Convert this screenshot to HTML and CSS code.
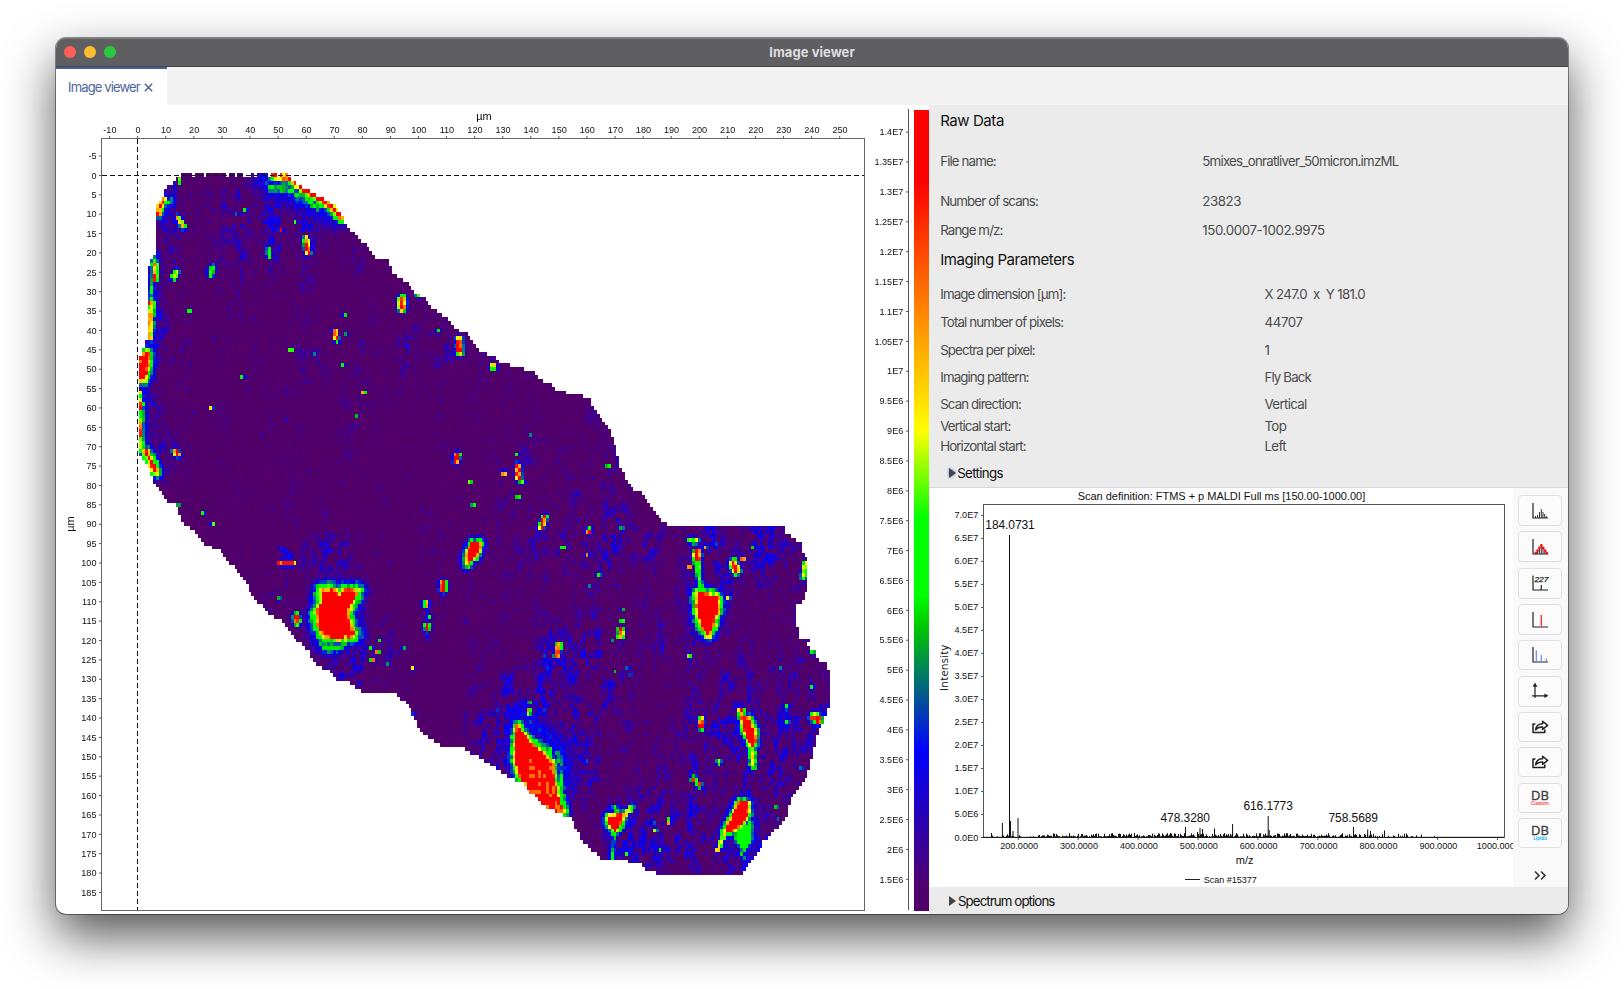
FILE: index.html
```html
<!DOCTYPE html>
<html lang="en">
<head>
<meta charset="utf-8">
<title>Image viewer</title>
<link rel="stylesheet" href="styles.css">
</head>
<body>
<div class="window">
  <header class="titlebar">
    <div class="lights"><i class="light red"></i><i class="light amber"></i><i class="light green"></i></div>
    <span class="title">Image viewer</span>
  </header>
  <nav class="tabs">
    <div class="tab"><span class="tab-label">Image viewer</span>
      <svg class="close" viewBox="0 0 9 9"><path d="M.8.8l7.4 7.4M8.2.8L.8 8.2"/></svg>
    </div>
  </nav>
  <main class="content">
    <section class="image-plot">
      <canvas id="heat" class="heat" width="873" height="809"></canvas>
      <svg id="axes" class="axes" viewBox="56 105 873 809">
        <defs>
          <linearGradient id="scale" gradientUnits="userSpaceOnUse" x1="0" y1="911" x2="0" y2="110">
            <stop offset="0" stop-color="#500064"/><stop offset=".035" stop-color="#500070"/>
            <stop offset=".2" stop-color="#0000ff"/><stop offset=".355" stop-color="#00c800"/>
            <stop offset=".395" stop-color="#00ff00"/><stop offset=".49" stop-color="#00ff00"/>
            <stop offset=".6" stop-color="#ffff00"/><stop offset=".91" stop-color="#ff0000"/>
            <stop offset="1" stop-color="#ff0000"/>
          </linearGradient>
        </defs>
        <rect x="914" y="110" width="15" height="801" fill="url(#scale)"/>
      </svg>
    </section>
    <aside class="side">
      <div class="info">
        <div class="row h33 heading"><span>Raw Data</span></div>
        <div class="row h47"><span>File name:</span><span class="file">5mixes_onratliver_50micron.imzML</span></div>
        <div class="row h33"><span>Number of scans:</span><span class="num">23823</span></div>
        <div class="row h25"><span>Range m/z:</span><span class="num">150.0007-1002.9975</span></div>
        <div class="row h34 heading"><span>Imaging Parameters</span></div>
        <div class="row wide h34"><span>Image dimension [µm]:</span><span class="dims">X 247.0&nbsp; x&nbsp; Y 181.0</span></div>
        <div class="row wide h22"><span>Total number of pixels:</span><span class="num">44707</span></div>
        <div class="row wide h34"><span>Spectra per pixel:</span><span>1</span></div>
        <div class="row wide h20"><span>Imaging pattern:</span><span>Fly Back</span></div>
        <div class="row wide h34"><span>Scan direction:</span><span class="dims">Vertical</span></div>
        <div class="row wide h11"><span>Vertical start:</span><span class="dims">Top</span></div>
        <div class="row wide h28"><span>Horizontal start:</span><span class="dims">Left</span></div>
        <div class="fold settings"><svg class="arrow glow" viewBox="0 0 7 10"><path d="M0 0l7 5-7 5z"/></svg><span>Settings</span></div>
      </div>
      <div class="spectrum">
        <svg id="spec" class="spec" viewBox="929 488 584 399"></svg>
        <div class="tools">
          <button class="tool"><svg viewBox="0 0 16 16"><path d="M1 0v15h15" class="k"/><path class="t" d="M3.5 15v-2M5.5 15v-3M7.5 15V9M9.3 15V6M11 15V9M12.7 15v-4M14.3 15v-2"/></svg></button>
          <button class="tool"><svg viewBox="0 0 16 16"><path d="M1 0v15h15" class="k"/><path class="t" d="M5.5 15v-3M7.5 15V9M9.3 15V6M11 15V9M12.7 15v-4"/><g fill="#f00d1c"><circle cx="9.3" cy="6.5" r="1.4"/><circle cx="7.4" cy="9" r="1.4"/><circle cx="11.2" cy="9" r="1.4"/><circle cx="5.6" cy="11.6" r="1.4"/><circle cx="13" cy="11.6" r="1.4"/><circle cx="3.8" cy="14" r="1.4"/><circle cx="14.8" cy="14" r="1.4"/></g></svg></button>
          <button class="tool"><svg viewBox="0 0 16 16"><path d="M1 .5V15h15M9.3 15v-5" class="k"/><text x="2.4" y="6.8" font-size="8" font-style="italic" textLength="14" lengthAdjust="spacingAndGlyphs" stroke="#222" stroke-width=".25">227</text></svg></button>
          <button class="tool"><svg viewBox="0 0 16 16"><path d="M1 0v15h15" class="k"/><path d="M9.3 14.5V3" stroke="#f22" stroke-width="1.3"/></svg></button>
          <button class="tool h30"><svg viewBox="0 0 16 16"><path d="M1 0v15h15" class="k"/><path d="M4.3 14.5V3.5M9.3 14.5V8M14.3 14.5v-3" stroke="#6b82ee" stroke-width="1.2"/></svg></button>
          <button class="tool"><svg viewBox="0 0 16 16"><path d="M3 15V2M0 12.8h14" class="k"/><path d="M3-.4l2.4 4.2H.6zM16.5 12.8l-4.1-2.3v4.6z"/></svg></button>
          <button class="tool h30"><svg viewBox="0 0 16 16"><path d="M3.4 5H1v8.6h11.8v-3M3.6 10.8C4.3 6.7 7 4.8 10.6 4.8V2.2l5 4.2-5 4V8C7.6 7.8 5.5 8.3 3.6 10.8z" class="share"/></svg></button>
          <button class="tool h30"><svg viewBox="0 0 16 16"><path d="M3.4 5H1v8.6h11.8v-3M3.6 10.8C4.3 6.7 7 4.8 10.6 4.8V2.2l5 4.2-5 4V8C7.6 7.8 5.5 8.3 3.6 10.8z" class="share"/></svg></button>
          <button class="tool h30 db"><b>DB</b><small class="custom">Custom</small></button>
          <button class="tool h30 db"><b>DB</b><small class="lipids">Lipids</small></button>
          <svg class="more" viewBox="0 0 12 9"><path d="M1 .5l4 4-4 4M7 .5l4 4-4 4"/></svg>
        </div>
      </div>
      <div class="fold options"><svg class="arrow" viewBox="0 0 7 10"><path d="M0 0l7 5-7 5z"/></svg><span>Spectrum options</span></div>
    </aside>
  </main>
</div>
<script src="plots.js"></script>
</body>
</html>
```
FILE: styles.css
```css
* { box-sizing: border-box; }
body { margin: 0; width: 1624px; height: 989px; padding: 38px 56px 0; background: #fff; overflow: hidden; font-family: Inter, "Liberation Sans", sans-serif; }
.window { width: 1512px; height: 876px; border-radius: 10px; overflow: hidden; background: #fff; display: flex; flex-direction: column; box-shadow: 0 0 0 1px rgba(0,0,0,.42), 0 22px 50px rgba(0,0,0,.67); }
.titlebar { height: 29px; background: #5f5f61; border-bottom: 1px solid #444; box-shadow: inset 0 1px #7b7b7c; display: grid; grid-template-columns: 100px 1fr 100px; align-items: center; }
.lights { display: flex; gap: 8px; padding-left: 8px; }
.light { width: 12px; height: 12px; border-radius: 50%; }
.red { background: #ff5f57; }
.amber { background: #febc2e; }
.green { background: #28c840; }
.title { text-align: center; font-size: 13px; font-weight: 700; color: #dededf; letter-spacing: .05px; padding-bottom: 1px; }
.tabs { height: 38px; background: #f3f3f3; display: flex; }
.tab { width: 111px; background: #fff; border-top: 2px solid #4b5f99; display: flex; align-items: center; gap: 4.5px; padding: 0 0 0 12px; color: #4f649c; font-size: 13px; }
.tab-label { width: 71px; letter-spacing: -.85px; white-space: nowrap; }
.close { width: 9px; height: 9px; stroke: #4a5f97; stroke-width: 1.4; fill: none; }
.content { flex: 1; display: flex; }
.image-plot { width: 873px; height: 809px; position: relative; }
.heat, .axes { position: absolute; left: 0; top: 0; width: 873px; height: 809px; }
svg text { font-family: "Liberation Sans", Arial, sans-serif; fill: #111; }
.tick { font-size: 9.1px; }
.axis-name { font-size: 11px; }
.side { width: 639px; display: flex; flex-direction: column; background: #ebebeb; }
.info { height: 382px; padding-left: 11.2px; font-size: 13.3px; letter-spacing: -.88px; color: #4c4c4c; }
.row { display: grid; grid-template-columns: 262px 1fr; align-items: center; white-space: nowrap; line-height: 11px; }
.wide { grid-template-columns: 324.3px 1fr; }
.num { letter-spacing: -.38px; }
.file { letter-spacing: -.75px; }
.dims { letter-spacing: -.66px; }
.h33 { height: 33px; } .h47 { height: 47px; } .h25 { height: 25px; } .h34 { height: 34px; }
.h22 { height: 22px; } .h20 { height: 20px; } .h11 { height: 11px; } .h28 { height: 28px; }
.heading { font-size: 15px; letter-spacing: -.43px; color: #111; padding-bottom: 2px; }
.fold { display: flex; align-items: center; gap: 1px; height: 26px; color: #111; font-size: 13.3px; letter-spacing: -.65px; }
.settings { padding-left: 9px; }
.options { padding-left: 20px; height: 27px; letter-spacing: -.92px; }
.options span { padding-left: 1px; }
.arrow { width: 7px; height: 10px; fill: #444; overflow: visible; }
.glow { filter: drop-shadow(0 0 1.5px #4a86d8); }
.spectrum { height: 400px; border-top: 1px solid #d8d8d8; display: flex; background: #fff; }
.spec { width: 584px; height: 399px; }
.tools { width: 55px; background: #f9f9f9; padding: 7px 6px 0 5px; display: flex; flex-direction: column; gap: 5.35px; align-items: stretch; }
.tool { height: 31px; border: 1px solid #e0e0e0; border-radius: 4px; background: #fbfbfb; padding: 0; display: flex; align-items: center; justify-content: center; }
.tool.h30 { height: 30px; }
.tool svg { width: 16px; height: 16px; overflow: visible; fill: #222; }
.k { fill: none; stroke: #222; stroke-width: 1.2; }
.t { fill: none; stroke: #333; stroke-width: 1; }
.share { fill: none; stroke: #222; stroke-width: 1.5; stroke-linejoin: round; }
.db { flex-direction: column; font-family: "Open Sans", Inter, sans-serif; color: #3c3c3c; }
.db b { font-weight: 400; font-size: 13px; line-height: 11.5px; -webkit-text-stroke: .35px #3c3c3c; }
.db small { font-size: 5px; line-height: 5px; -webkit-text-stroke: .2px currentColor; }
.custom { color: #ff4b4b; }
.lipids { color: #18b8f0; }
.more { width: 12px; height: 9px; margin: 17.5px auto 0; fill: none; stroke: #333; stroke-width: 1.6; overflow: visible; }
```
FILE: plots.js
```js
const NS = 'http://www.w3.org/2000/svg';
function el(parent, tag, attrs, text) {
  const n = document.createElementNS(NS, tag);
  for (const k in attrs) n.setAttribute(k, attrs[k]);
  if (text !== undefined) n.textContent = text;
  parent.appendChild(n);
  return n;
}
function line(p, x1, y1, x2, y2, extra) {
  el(p, 'line', Object.assign({ x1, y1, x2, y2, stroke: '#555', 'stroke-width': 1 }, extra));
}
const X0 = 137.7, SX = 2.808, Y0 = 175.4, SY = 3.876;

// Axes of the ion image
const ax = document.getElementById('axes');
el(ax, 'rect', { x: 101.5, y: 138.5, width: 763, height: 772, fill: 'none', stroke: '#666' });
for (let v = -10; v <= 250; v += 10) {
  const x = X0 + v * SX;
  line(ax, x, 136, x, 138);
  el(ax, 'text', { x: x + .3, y: 133, 'text-anchor': 'middle', class: 'tick' }, v);
}
for (let v = -5; v <= 185; v += 5) {
  const y = Y0 + v * SY;
  line(ax, 99, y, 101, y);
  el(ax, 'text', { x: 96.5, y: y + 3.2, 'text-anchor': 'end', class: 'tick' }, v);
}
el(ax, 'text', { x: 484, y: 120, 'text-anchor': 'middle', class: 'axis-name' }, 'µm');
el(ax, 'text', { x: 0, y: 0, 'text-anchor': 'middle', class: 'axis-name', transform: 'translate(74 524) rotate(-90)' }, 'µm');
line(ax, 908.5, 109, 908.5, 910);
line(ax, 137.5, 139, 137.5, 910, { stroke: '#111', 'stroke-dasharray': '5 3' });
line(ax, 102, 175.5, 864, 175.5, { stroke: '#111', 'stroke-dasharray': '5 3' });
for (let i = 0; i <= 25; i++) {
  const v = 15 + i * 5, y = 879.3 - i * 29.885;
  line(ax, 906, y, 908, y);
  el(ax, 'text', { x: 903.3, y: y + 3.2, 'text-anchor': 'end', class: 'tick' }, v >= 100 ? v / 100 + 'E7' : v / 10 + 'E6');
}

// Ion image
const outline = [[185,174],[285,174],[303,188],[322,197],[330,202],[342,213],[345,225],[355,233],[365,245],[377,258],[388,260],[393,273],[408,283],[415,292],[427,300],[433,308],[445,317],[455,327],[466,334],[473,342],[482,352],[496,356],[500,363],[505,364],[519,368],[536,372],[537,379],[550,383],[556,390],[578,395],[589,399],[595,408],[606,423],[612,437],[617,450],[620,467],[626,477],[630,487],[640,492],[648,502],[658,517],[668,526],[783,526],[788,535],[800,542],[803,553],[808,563],[808,578],[805,597],[797,606],[797,625],[800,638],[811,639],[808,645],[816,653],[819,662],[825,662],[830,675],[831,700],[827,713],[824,721],[819,730],[816,740],[813,755],[808,772],[802,785],[790,802],[785,820],[775,830],[763,843],[752,862],[740,876],[665,876],[648,871],[637,862],[603,860],[588,847],[580,837],[572,818],[558,813],[543,805],[535,797],[523,783],[510,778],[493,767],[480,758],[465,749],[443,748],[420,732],[412,712],[398,694],[367,694],[350,683],[337,682],[330,672],[317,665],[308,650],[295,638],[280,620],[272,616],[258,602],[249,589],[243,577],[230,563],[218,548],[207,547],[193,530],[182,523],[178,507],[165,499],[156,487],[147,465],[139,453],[140,395],[138,373],[140,357],[148,337],[148,268],[155,253],[155,210],[160,200],[168,187],[178,178]];
// peak, falloff, points
const spots = [
  [14,8,[323,592],[330,591],[340,597],[346,592],[355,592],[352,598],[347,609],[345,617],[350,628],[353,634],[337,637],[324,633],[319,623],[318,613],[323,603]],
  [6,7,[320,645],[345,645],[338,650],[324,651]],[6.2,5,[325,585],[331,584]],[4,22,[325,605],[350,605],[345,640],[325,640]],
  [14,6,[518,727],[523,736],[533,747],[546,756],[551,763],[553,780],[557,797],[562,812],[558,812],[543,805],[535,795],[523,780],[517,767],[516,753],[517,737]],
  [6.5,5,[527,735],[560,755],[561,778],[564,800]],
  [3.9,19,[522,715],[560,745],[568,780]],
  [14,6,[698,594],[717,597],[717,610],[711,628],[708,634],[702,625],[698,612]],[3.4,22,[697,595],[720,597],[708,630]],
  [14,4,[743,719],[749,719],[754,730],[755,743],[752,747],[745,733]],[3.6,10,[744,719],[754,745]],
  [12,2,[741,711],[742,717]],[9,3,[752,748],[753,766]],
  [14,5,[740,803],[747,804],[747,815],[737,827],[726,832],[731,820]],[3.6,14,[740,803],[750,850],[728,832]],
  [7.2,4.5,[735,836],[750,822],[752,840],[744,850]],[5.5,4,[740,852],[745,859]],[9,2,[725,833],[718,850]],
  [14,4.5,[608,818],[622,815],[621,822],[615,831],[610,825]],[8.5,2.5,[625,814],[632,807]],[7,4,[615,832],[612,857]],[5.5,3,[612,808],[622,811]],
  [14,4.5,[472,544],[480,543],[477,553],[467,564],[467,557]],
  [14.5,6,[141,357],[147,353],[147,363],[144,378],[139,378]],[3.8,12,[150,337],[148,360],[143,395],[143,450]],
  [6.5,6,[155,255],[152,285],[152,340]],[13,2,[149,303],[153,305]],[10,3,[151,310],[150,337]],[12,2,[155,263],[155,279]],
  [7.5,3,[140,393],[141,448]],[12,1.5,[141,404],[140,408]],[12,1.5,[140,422],[140,436]],
  [16.5,5,[146,452],[151,462],[156,472]],
  [17,4,[158,213],[160,206],[163,200]],[6.5,6,[165,205],[171,200]],[3.5,14,[165,195],[165,215]],
  [17.5,4.5,[274,175],[290,179],[304,189],[321,199],[334,210],[341,218]],[7,8.5,[272,188],[290,190],[305,198],[318,207]],
  [6,4,[267,184],[272,190]],
  [4,20,[262,180],[300,202],[335,218]],
  [13,2,[306,240],[308,252]],[6,1.5,[269,249],[269,257]],[7,3,[211,274],[213,267]],[11,2,[174,277],[177,272]],
  [10,1.5,[178,217],[184,227]],[9,1,[180,181]],[12,1,[281,230]],[6.5,1,[245,211]],[5,1,[236,214]],[7,1,[295,222]],[7,1,[190,311]],
  [12,1.5,[335,331],[337,340]],[15,2.5,[402,299],[402,308]],[8,1.5,[418,296]],[7,1.5,[438,331]],[5.5,1,[345,315]],[6,1,[346,333]],
  [7,1,[291,350]],[7,1,[242,377]],[9,1,[211,408]],[9,1,[363,393]],[6,1,[357,416]],[6.5,1,[343,366]],[5,1,[315,354]],
  [13,2,[175,451],[178,455]],[6,1.5,[178,505]],[7,1,[203,513]],[7,1,[213,524]],[15,2,[457,455],[456,461]],[13,2.5,[459,340],[460,352]],
  [12,2,[493,367]],[9,1,[470,482]],[6,1,[473,505]],[13,1.5,[280,563],[293,563]],[4,3,[281,548],[290,557]],[15,2.5,[296,617],[297,622]],[6,1,[279,598]],
  [15,2.5,[443,584],[443,589]],[12,2.5,[426,604]],[13,2.5,[427,627]],[4,5,[427,604],[427,638]],[6,1,[430,617]],
  [9,1,[371,648]],[12,1,[377,652]],[10,1.5,[373,660]],[5,1,[388,664]],[7,1,[404,648]],[8,1,[413,669]],[5.5,1,[379,641]],[5,2,[413,715]],
  [7,1.5,[530,703]],[12,1.5,[529,712]],[13,2,[545,517],[541,527]],[13,2,[589,531]],[6,1,[622,528]],[6,1,[563,547]],[12,1,[587,555]],
  [8,1,[599,575]],[6,1,[590,587]],[7,1,[623,610]],[6.5,1,[622,621]],[12,2,[621,630],[621,636]],[5,1,[612,641]],[13,2,[559,646],[557,655]],
  [6,1,[627,668]],[5,1,[630,675]],[5,1,[615,672]],[7.5,3,[690,540],[696,541]],[15,2.5,[697,553],[697,560]],[12,1,[705,547]],[12,1,[689,567]],
  [7,2.5,[698,565],[700,590]],[16,3,[733,563],[736,570]],[12,1.5,[743,559]],[7,1,[753,547]],[9,2,[806,563],[803,578]],[9,1,[728,598]],
  [9,2,[689,656]],[7,2,[813,652]],[5.5,1.5,[781,669]],[7,1,[812,687]],[9,1,[787,708]],[9,1,[787,722]],[4,3,[786,708],[787,727]],
  [16,3,[814,717],[818,720]],[12,2,[701,720],[701,727]],[10,2,[719,762]],[12,2,[694,779]],[12,2,[699,785]],[5,1,[587,761]],[9,1,[655,830]],
  [12,1,[669,821]],[6.5,1,[660,850]],[7,1,[627,854]],[7,1,[776,807]],[5,1,[778,818]],[6,1.5,[801,769]],
  [7,1,[517,455]],[5,1.5,[531,436]],[13,2,[518,466],[519,478]],[8,1.5,[522,482]],[7,1,[518,497]],[10,1.5,[504,473]],[7,1,[608,467]]
];
// centre, radii and strength of the faint background signal
const haze = [
  [300,215,70,45,1.4],[180,200,20,60,.7],[160,300,16,110,1.1],[150,420,18,80,1.3],[430,340,70,40,.4],[240,210,12,45,.4],
  [335,620,50,50,.9],[330,555,25,30,.4],[540,740,60,65,1.4],[560,690,50,60,.6],[700,590,35,70,1.3],[745,545,55,35,1.3],
  [780,680,60,90,.9],[745,740,60,50,.6],[740,820,60,55,1.2],[620,840,40,40,1.1],[600,560,60,60,.5],[610,660,60,40,.7],[680,860,80,18,.9],[810,700,25,60,.6],
  [545,500,60,80,.35],[600,430,40,60,.35],[380,370,90,80,.2],[690,770,40,70,.4],[780,570,30,30,.3],[355,675,50,25,.6]
];
const ramp = [[1,80,0,104],[1.5,80,0,112],[3.8,0,0,255],[5,0,118,150],[5.7,0,200,0],[6.2,0,255,0],[7.5,0,255,0],[9,255,255,0],[11,255,150,0],[13.2,255,0,0]];
function color(v) {
  if (v <= 1) return 'rgb(84,0,104)';
  for (let i = 1; i < ramp.length; i++) {
    const a = ramp[i - 1], b = ramp[i];
    if (v < b[0]) {
      const t = (v - a[0]) / (b[0] - a[0]);
      return `rgb(${[1, 2, 3].map(k => Math.round(a[k] + (b[k] - a[k]) * t))})`;
    }
  }
  return '#f00';
}
function rnd(x, y) {
  let h = Math.imul(x | 0, 374761393) + Math.imul(y | 0, 668265263);
  h = Math.imul(h ^ (h >>> 13), 1274126177);
  return ((h ^ (h >>> 16)) >>> 0) / 4294967296;
}
function smooth(x, y) {
  const i = Math.floor(x), j = Math.floor(y);
  let u = x - i, w = y - j;
  u = u * u * (3 - 2 * u); w = w * w * (3 - 2 * w);
  return (rnd(i, j) * (1 - u) + rnd(i + 1, j) * u) * (1 - w) + (rnd(i, j + 1) * (1 - u) + rnd(i + 1, j + 1) * u) * w;
}
function inside(p, x, y) {
  let c = false;
  for (let i = 0, j = p.length - 1; i < p.length; j = i++) {
    const a = p[i], b = p[j];
    if ((a[1] > y) !== (b[1] > y) && x < (b[0] - a[0]) * (y - a[1]) / (b[1] - a[1]) + a[0]) c = !c;
  }
  return c;
}
function distance(p, closed, x, y) {
  if (closed && inside(p, x, y)) return 0;
  let best = 1e9;
  for (let i = 0; i < p.length; i++) {
    const a = p[i], b = i + 1 < p.length ? p[i + 1] : closed ? p[0] : a;
    const dx = b[0] - a[0], dy = b[1] - a[1], q = dx * dx + dy * dy;
    const t = q ? Math.max(0, Math.min(1, ((x - a[0]) * dx + (y - a[1]) * dy) / q)) : 0;
    best = Math.min(best, Math.hypot(x - a[0] - t * dx, y - a[1] - t * dy));
  }
  return best;
}
// entries drawn as open strips rather than filled areas
const open = [[4, 20], [3.8, 12], [17.5, 4.5], [7, 8.5], [6.5, 5], [3.9, 19]];
const notches = [20, 24, 32, 35, 38, 39, 40, 42, 47, 50];
const ctx = document.getElementById('heat').getContext('2d');
for (let j = 0; j <= 181; j++) for (let i = 0; i <= 247; i++) {
  const x = X0 + i * SX, y = Y0 + j * SY;
  if (!inside(outline, x, y)) continue;
  if (j === 0 && notches.includes(i)) continue;
  let h = .05;
  for (const z of haze) h += z[4] * Math.exp(-(((x - z[0]) / z[2]) ** 2) - ((y - z[1]) / z[3]) ** 2);
  const streak = Math.max(0, smooth(i / 6 + 40, j / 12 + 9) - .35) * 1.6;
  const grain = smooth(i / 1.6, j / 1.9) * .6 + rnd(i + 900, j + 77) * .4;
  let v = 1 + Math.max(0, grain - .36) * (h * 2.5 + .6) * (.4 + streak) * 2.1;
  v = Math.min(v, 3.1 + rnd(i + 5, j + 5) * .7);
  if (rnd(i + 31, j + 555) > .996 - h * .008) v += 1.1;
  for (const s of spots) {
    const p = s.slice(2);
    if (Math.abs(x - p[0][0]) > 110 || Math.abs(y - p[0][1]) > 110) continue;
    const strip = open.some(o => o[0] === s[0] && o[1] === s[1]);
    const d = distance(p, p.length > 3 && !strip, x, y);
    const slack = s[1] < 3.1 ? 1.7 : 0;
    let q = s[0] * Math.exp(-Math.max(0, d - slack) / s[1]);
    if (d > 0) q *= .78 + .4 * rnd(i + 7, j + 3);
    else if (x > 530 && x < 570 && y > 760 && y < 815 && rnd(i + 70, j + 30) > .82) q = 11.5;
    if (q > v) v = q;
  }
  const l = Math.round(x - SX / 2 - 56), r = Math.round(x + SX / 2 - 56);
  const t = Math.round(y - SY / 2 - 105), b = Math.round(y + SY / 2 - 105);
  ctx.fillStyle = color(v);
  ctx.fillRect(l, t, r - l, b - t);
}

// Spectrum
const sp = document.getElementById('spec');
const mx = m => 1018.3 + (m - 200) * .599;
el(sp, 'text', { x: 1077.7, y: 499.7, 'font-size': 11, textLength: 287.5 }, 'Scan definition: FTMS + p MALDI Full ms [150.00-1000.00]');
el(sp, 'rect', { x: 983.5, y: 504.5, width: 521, height: 333, fill: 'none', stroke: '#555' });
for (let i = 0; i <= 14; i++) {
  const y = 837.5 - i * 23.01;
  line(sp, 981, y, 983, y);
  el(sp, 'text', { x: 978.3, y: y + 3, 'text-anchor': 'end', class: 'tick' }, i === 0 ? '0.0E0' : i === 1 ? '5.0E6' : (i / 2).toFixed(1) + 'E7');
}
for (let m = 200; m <= 1000; m += 100) {
  line(sp, mx(m), 838, mx(m), 840);
  el(sp, 'text', { x: mx(m) + .8, y: 849, 'text-anchor': 'middle', class: 'tick' }, m + '.0000');
}
line(sp, 983, 837.3, 1504, 837.3, { stroke: '#111' });
for (let x = 990; x < 1440; x += 1) {
  const f = x < 1040 ? .55 : x < 1330 ? 1 : x < 1400 ? .6 : .25;
  const r = rnd(x, 42);
  if (r < f * .85) line(sp, x + .5, 837, x + .5, 837 - .6 - 3.4 * rnd(x, 8) ** 2, { stroke: '#111' });
}
[[991.5,4],[1002.4,14],[1009.5,302],[1010.5,16],[1013,6],[1018,19],[1185.5,10],[1197.5,5],[1200,9],[1202.5,8],[1214.5,8.5],[1232.6,13],[1268.2,21],[1269.2,7],[1353.5,10],[1367.7,7.5],[1370.5,6],[1384.5,6.5],[1406.5,3.5],[1421.5,2.5]]
  .forEach(p => line(sp, p[0], 837, p[0], 837 - p[1], { stroke: '#111' }));
[['184.0731',985.3,529.3],['478.3280',1160.5,821.5],['616.1773',1243.4,810.4],['758.5689',1328.5,822]]
  .forEach(t => el(sp, 'text', { x: t[1], y: t[2], 'font-size': 12, textLength: 49.5 }, t[0]));
el(sp, 'text', { x: 1244.7, y: 864, 'text-anchor': 'middle', 'font-size': 11 }, 'm/z');
el(sp, 'text', { x: 0, y: 0, 'text-anchor': 'middle', style: 'font-family:"Open Sans",sans-serif', 'font-size': 11, textLength: 46, transform: 'translate(948 668) rotate(-90)' }, 'Intensity');
line(sp, 1185, 879.5, 1200, 879.5, { stroke: '#222' });
el(sp, 'text', { x: 1203.8, y: 882.8, class: 'tick', textLength: 53 }, 'Scan #15377');
```
